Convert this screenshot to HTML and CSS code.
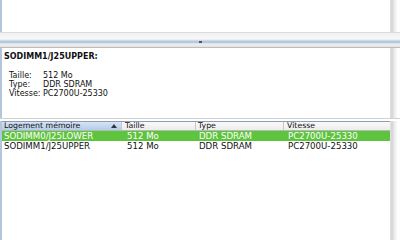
FILE: index.html
```html
<!DOCTYPE html>
<html>
<head>
<meta charset="utf-8">
<link rel="stylesheet" href="styles.css">
</head>
<body>
<div class="win">
  <div class="pane pane-top">
    <div class="content"></div>
    <div class="gutter"></div>
  </div>
  <div class="splitter"><span class="grip"></span></div>
  <div class="pane pane-detail">
    <div class="content detail">
      <div class="title">SODIMM1/J25UPPER:</div>
      <div class="props">
        <span class="k">Taille:</span><span class="v">512 Mo</span>
        <span class="k">Type:</span><span class="v">DDR SDRAM</span>
        <span class="k">Vitesse:</span><span class="v">PC2700U-25330</span>
      </div>
    </div>
    <div class="gutter"></div>
  </div>
  <div class="pane pane-table">
    <div class="content table">
      <div class="row head">
        <div class="c c1 sorted">Logement mémoire<span class="tri"></span></div>
        <div class="c c2">Taille</div>
        <div class="c c3">Type</div>
        <div class="c c4">Vitesse</div>
      </div>
      <div class="row sel">
        <div class="c c1">SODIMM0/J25LOWER</div>
        <div class="c c2">512 Mo</div>
        <div class="c c3">DDR SDRAM</div>
        <div class="c c4">PC2700U-25330</div>
      </div>
      <div class="row">
        <div class="c c1">SODIMM1/J25UPPER</div>
        <div class="c c2">512 Mo</div>
        <div class="c c3">DDR SDRAM</div>
        <div class="c c4">PC2700U-25330</div>
      </div>
    </div>
    <div class="gutter"></div>
  </div>
</div>
</body>
</html>
```
FILE: styles.css
```css
html, body {
  margin: 0;
  padding: 0;
  background: #fff;
}
body {
  width: 400px;
  height: 240px;
  overflow: hidden;
  font-family: "DejaVu Sans", sans-serif;
  font-size: 8px;
  color: #111;
}
.win {
  display: flex;
  flex-direction: column;
  height: 240px;
}
.pane {
  display: flex;
}
.content {
  flex: 1;
  border-left: 2px solid #b4c6dc;
  background: #fff;
}
.gutter {
  width: 10px;
  background: linear-gradient(to right, #e2e2e2 0, #d4d4d4 2px, #f0f0f0 5px, #fff 8px);
}
.pane-top {
  height: 32px;
  border-bottom: 1px solid #dcdcdc;
}
.splitter {
  height: 14px;
  background: linear-gradient(to bottom, #f0f0f0 0, #f7f7f7 6px, #a9bfd8 9px, #c7d5e6 10px, #efefef 11px, #e4e4e4 14px);
  position: relative;
}
.grip {
  position: absolute;
  left: 199px;
  top: 8px;
  width: 3px;
  height: 2px;
  background: #555;
}
.pane-detail {
  height: 70px;
  border-top: 1px solid #bdbdbd;
  border-bottom: 1px solid #d0d0d0;
}
.detail {
  padding: 4px 0 0 2px;
}
.title {
  font-weight: bold;
  line-height: 10px;
}
.props {
  display: grid;
  grid-template-columns: 34px auto;
  padding: 9px 0 0 5px;
  line-height: 9px;
  justify-content: start;
}
.pane-table {
  flex: 1;
  padding-top: 2px;
}
.table {
  border-left: 2px solid #b4c6dc;
  font-size: 8.6px;
}
.row {
  display: flex;
  height: 10px;
  line-height: 10px;
}
.row.head {
  height: 8px;
  line-height: 8px;
  font-size: 7.8px;
  border-top: 1px solid #8a9cb8;
  border-bottom: 1px solid #b8b8b8;
  background: linear-gradient(to bottom, #fafafa, #ececec);
}
.row.sel {
  background: #5ec43e;
  color: #fff;
}
.c {
  box-sizing: border-box;
  padding-left: 2px;
  white-space: nowrap;
  overflow: hidden;
}
.c1 { width: 120px; position: relative; }
.c2 { width: 74px; padding-left: 5px; }
.c3 { width: 88px; padding-left: 3px; }
.c4 { flex: 1; padding-left: 4px; }
.head .c { border-right: 1px solid #c8c8c8; padding-left: 2px; }
.head .c2 { padding-left: 3px; }
.head .c3 { padding-left: 2px; }
.head .c4 { padding-left: 3px; border-right: none; }
.head .sorted {
  background: linear-gradient(to bottom, #d6e4f5, #b4cbe9);
}
.tri {
  position: absolute;
  right: 4px;
  top: 2px;
  width: 0;
  height: 0;
  border-left: 3px solid transparent;
  border-right: 3px solid transparent;
  border-bottom: 4px solid #333;
}
```
